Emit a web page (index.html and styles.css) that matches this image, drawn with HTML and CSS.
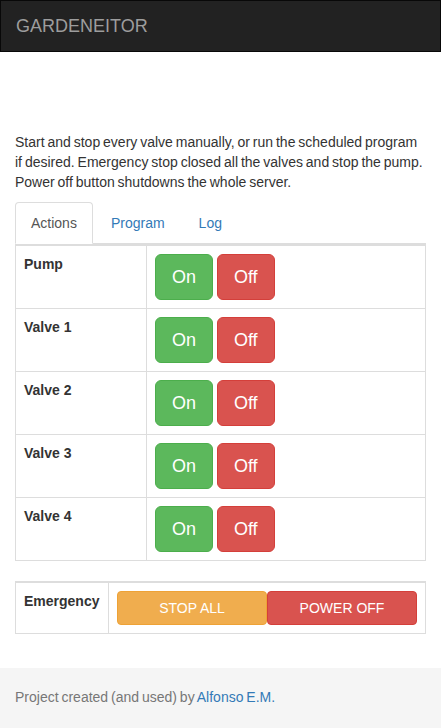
FILE: index.html
```html
<!DOCTYPE html>
<html>
<head>
<meta charset="utf-8">
<title>Gardeneitor</title>
<link rel="stylesheet" href="styles.css">
</head>
<body>
<nav class="navbar">
  <a class="brand" href="#">GARDENEITOR</a>
</nav>
<main class="container">
  <p class="intro">Start and stop every valve manually, or run the scheduled program if desired. Emergency stop closed all the valves and stop the pump. Power off button shutdowns the whole server.</p>
  <ul class="tabs">
    <li class="tab active"><a href="#">Actions</a></li>
    <li class="tab"><a href="#">Program</a></li>
    <li class="tab"><a href="#">Log</a></li>
  </ul>
  <table class="grid valves">
    <tbody>
      <tr><th class="label">Pump</th><td class="actions"><button class="btn btn-lg success">On</button> <button class="btn btn-lg danger">Off</button></td></tr>
      <tr><th class="label">Valve 1</th><td class="actions"><button class="btn btn-lg success">On</button> <button class="btn btn-lg danger">Off</button></td></tr>
      <tr><th class="label">Valve 2</th><td class="actions"><button class="btn btn-lg success">On</button> <button class="btn btn-lg danger">Off</button></td></tr>
      <tr><th class="label">Valve 3</th><td class="actions"><button class="btn btn-lg success">On</button> <button class="btn btn-lg danger">Off</button></td></tr>
      <tr><th class="label">Valve 4</th><td class="actions"><button class="btn btn-lg success">On</button> <button class="btn btn-lg danger">Off</button></td></tr>
    </tbody>
  </table>
  <table class="grid emergency">
    <tbody>
      <tr><th class="label">Emergency</th><td class="actions"><div class="pair"><button class="btn warning">STOP ALL</button><button class="btn danger">POWER OFF</button></div></td></tr>
    </tbody>
  </table>
</main>
<footer class="footer">
  <p>Project created (and used) by <a href="#">Alfonso E.M.</a></p>
</footer>
</body>
</html>
```

FILE: styles.css
```css
html, body {
  margin: 0;
  padding: 0;
}
body {
  font-family: "Liberation Sans", Arial, sans-serif;
  font-size: 14px;
  line-height: 20px;
  color: #333;
  background: #fff;
}
a {
  color: #337ab7;
  text-decoration: none;
}
.navbar {
  background: #222;
  border: 1px solid #080808;
  height: 50px;
  box-sizing: content-box;
}
.brand {
  display: inline-block;
  padding: 15px;
  font-size: 18px;
  line-height: 20px;
  color: #9d9d9d;
}
.container {
  padding: 80px 15px 0;
}
.intro {
  margin: 0 0 10px;
  word-spacing: -1px;
}
.tabs {
  list-style: none;
  margin: 0;
  padding: 0;
  display: flex;
  border-bottom: 1px solid #ddd;
}
.tab {
  margin: 0 2px -1px 0;
}
.tab a {
  display: block;
  padding: 10px 15px;
  line-height: 20px;
  border: 1px solid transparent;
  border-radius: 4px 4px 0 0;
}
.tab.active a {
  color: #555;
  background: #fff;
  border-color: #ddd #ddd transparent;
}
.grid {
  width: 100%;
  border-collapse: collapse;
  border: 1px solid #ddd;
  border-top-width: 2px;
  margin: 0 0 20px;
}
.grid th, .grid td {
  border: 1px solid #ddd;
  padding: 8px;
  vertical-align: top;
  text-align: left;
}
.grid tr:first-child th, .grid tr:first-child td {
  border-top: 2px solid #ddd;
}
.label {
  font-weight: bold;
}
.valves .label {
  width: 114px;
}
.emergency {
  margin: 0 0 34px;
}
.emergency .label {
  width: 76px;
}
.btn {
  font-family: "Liberation Sans", Arial, sans-serif;
  display: inline-block;
  padding: 6px 12px;
  font-size: 14px;
  line-height: 20px;
  border: 1px solid transparent;
  border-radius: 4px;
  color: #fff;
  cursor: pointer;
  margin: 0;
  vertical-align: middle;
}
.btn-lg {
  padding: 10px 16px;
  font-size: 18px;
  line-height: 24px;
  border-radius: 6px;
}
.success {
  background: #5cb85c;
  border-color: #4cae4c;
}
.danger {
  background: #d9534f;
  border-color: #d43f3a;
}
.warning {
  background: #f0ad4e;
  border-color: #eea236;
}
.pair {
  display: flex;
}
.pair .btn {
  flex: 1 1 0;
}
.footer {
  background: #f5f5f5;
  padding: 19px 15px 21px;
  color: #777;
  word-spacing: -1px;
}
.footer p {
  margin: 0;
}
```
